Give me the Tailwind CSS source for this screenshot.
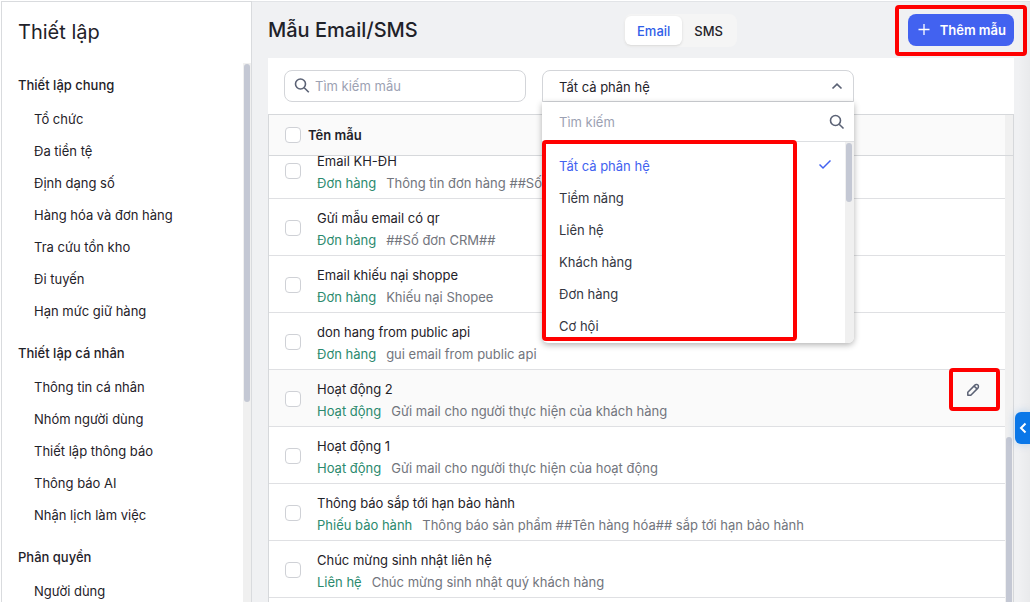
<!DOCTYPE html>
<html lang="vi">
<head>
  <meta charset="UTF-8">
  <meta name="viewport" content="width=device-width, initial-scale=1.0">
  <title>Mẫu Email/SMS - Thiết lập</title>
  <script src="https://cdn.jsdelivr.net/npm/@tailwindcss/browser@4"></script>
</head>
<body class="bg-white font-['Inter','Noto_Sans',sans-serif] text-[13px] text-[#1f2229]">
  <div class="relative flex h-screen overflow-hidden pt-px">

    <!-- Sidebar -->
    <aside class="ml-px flex w-[251px] shrink-0 flex-col border-x border-t border-[#d9dbde] bg-white">
      <h2 class="px-4 pt-4 pb-[17px] text-[20px] leading-7">Thiết lập</h2>
      <div class="flex min-h-0 flex-1">
        <nav class="min-w-0 flex-1 overflow-hidden pt-1">
          <h3 class="px-4 leading-9 font-medium">Thiết lập chung</h3>
          <ul class="mb-2 px-8 leading-8">
            <li><a href="#">Tổ chức</a></li>
            <li><a href="#">Đa tiền tệ</a></li>
            <li><a href="#">Định dạng số</a></li>
            <li><a href="#">Hàng hóa và đơn hàng</a></li>
            <li><a href="#">Tra cứu tồn kho</a></li>
            <li><a href="#">Đi tuyến</a></li>
            <li><a href="#">Hạn mức giữ hàng</a></li>
          </ul>
          <h3 class="px-4 leading-9 font-medium">Thiết lập cá nhân</h3>
          <ul class="mb-2 px-8 leading-8">
            <li><a href="#">Thông tin cá nhân</a></li>
            <li><a href="#">Nhóm người dùng</a></li>
            <li><a href="#">Thiết lập thông báo</a></li>
            <li><a href="#">Thông báo AI</a></li>
            <li><a href="#">Nhận lịch làm việc</a></li>
          </ul>
          <h3 class="px-4 leading-9 font-medium">Phân quyền</h3>
          <ul class="px-8 leading-8">
            <li><a href="#">Người dùng</a></li>
          </ul>
        </nav>
        <div class="w-2 bg-[#f0f0f0] p-px">
          <div class="h-[338px] rounded-full bg-[#c4c8d4]"></div>
        </div>
      </div>
    </aside>

    <!-- Main -->
    <main class="flex min-w-0 flex-1 flex-col border-t border-[#e2e4e7] bg-[#f0f1f3] pl-4">
      <header class="flex h-14 shrink-0 items-center pr-4">
        <h1 class="w-[356px] text-[20px] leading-7 font-medium">Mẫu Email/SMS</h1>
        <div class="flex rounded-lg bg-[#f5f5f5] py-0.5 pr-0.5 pl-px leading-7 font-medium">
          <button class="rounded-md bg-white px-3 pt-px text-[#2f5ee8] shadow-sm">Email</button>
          <button class="px-3 pt-px">SMS</button>
        </div>
        <div class="relative ml-auto">
          <button class="flex h-8 items-center rounded-lg bg-[#4262f0] pr-2 pl-2.5 font-semibold text-white">
            <svg class="mr-2.5 size-3" viewBox="0 0 12 12" fill="none" stroke="currentColor" stroke-width="1.3"><path d="M6 0v11M0.5 5.5h11"/></svg>
            <span class="pt-px">Thêm mẫu</span>
          </button>
          <div class="pointer-events-none absolute -inset-x-[13px] -top-[9px] -bottom-[10px] rounded-sm border-4 border-[#ff0000]"></div>
        </div>
      </header>

      <section class="mr-4 flex min-h-0 flex-1 flex-col bg-white">
        <!-- Filters -->
        <div class="flex gap-4 px-4 py-3">
          <div class="flex h-8 w-[242px] items-center rounded-lg border border-[#d3d5d9] px-[9px]">
            <svg class="mr-[5px] size-4 shrink-0 text-[#5b6275]" viewBox="0 0 16 16" fill="none" stroke="currentColor" stroke-width="1.6"><circle cx="6.5" cy="6" r="5"/><path d="M10.2 9.7 14.8 14.3"/></svg>
            <input type="text" aria-label="Tìm kiếm mẫu" placeholder="Tìm kiếm mẫu" class="w-full min-w-0 pt-0.5 outline-none placeholder:text-[#9ca1b3]">
          </div>

          <div class="relative w-[312px]">
            <select aria-label="Phân hệ" class="h-8 w-full appearance-none rounded-t-lg border border-[#d3d5d9] bg-white px-4 pt-[3px] outline-none">
              <option>Tất cả phân hệ</option>
              <option>Tiềm năng</option>
              <option>Liên hệ</option>
              <option>Khách hàng</option>
              <option>Đơn hàng</option>
              <option>Cơ hội</option>
            </select>
            <svg class="pointer-events-none absolute top-2.5 right-[11px] size-3 text-[#5b6275]" viewBox="0 0 12 12" fill="none" stroke="currentColor" stroke-width="1.7"><path d="M1.5 8.5 6 4.2 10.5 8.5"/></svg>

            <!-- Open list -->
            <div class="absolute inset-x-0 top-full z-10 rounded-b-md bg-white shadow-[0_2px_6px_rgba(0,0,0,0.3)]">
              <div class="flex h-10 items-center border-b border-[#dddfe2] pt-px pr-[9px] pl-[17px]">
                <input type="text" aria-label="Tìm kiếm" placeholder="Tìm kiếm" class="min-w-0 flex-1 pt-px outline-none placeholder:text-[#9ca1b3]">
                <svg class="size-4 text-[#5b6275]" viewBox="0 0 16 16" fill="none" stroke="currentColor" stroke-width="1.6"><circle cx="6.5" cy="6.5" r="5"/><path d="M10.2 10.2 14.5 14.5"/></svg>
              </div>
              <div class="flex h-[201px] overflow-hidden rounded-b-md">
                <ul role="listbox" class="flex-1 py-2 pl-[17px] leading-8 text-[#33363f]">
                  <li role="option" aria-selected="true" class="flex items-center justify-between pr-3.5 text-[#4262f0]">
                    Tất cả phân hệ
                    <svg class="size-3" viewBox="0 0 12 12" fill="none" stroke="currentColor" stroke-width="1.5"><path d="M0.5 4.5 4 8 11.5 0.5"/></svg>
                  </li>
                  <li role="option">Tiềm năng</li>
                  <li role="option">Liên hệ</li>
                  <li role="option">Khách hàng</li>
                  <li role="option">Đơn hàng</li>
                  <li role="option">Cơ hội</li>
                </ul>
                <div class="w-[9px] bg-[#f0f0f0] p-px pr-0.5">
                  <div class="h-[59px] rounded-full bg-[#c4c8d4]"></div>
                </div>
              </div>
              <div class="pointer-events-none absolute top-[38px] right-[57px] bottom-0.5 left-0 rounded-sm border-4 border-[#ff0000]"></div>
            </div>
          </div>
        </div>

        <!-- Template list -->
        <div class="flex min-h-0 flex-1 border border-b-0 border-[#d6d8db]">
          <div class="flex min-w-0 flex-1 flex-col">
            <label class="flex h-[41px] shrink-0 items-center gap-[7px] border-b border-[#d6d8db] bg-[#fafafa] px-4 font-semibold">
              <input type="checkbox" class="size-4 appearance-none rounded border border-[#cfd1d6] bg-white">
              <span class="pt-0.5">Tên mẫu</span>
            </label>
            <div class="min-h-0 flex-1 overflow-hidden">
              <ul class="-mt-3.5">
                <li class="flex h-[57px] items-center gap-4 border-b border-[#dfe0e3] px-4 pt-0.5">
                  <input type="checkbox" aria-label="Email KH-ĐH" class="size-4 shrink-0 appearance-none rounded border border-[#cfd1d6] bg-white">
                  <div class="flex-1 pt-0.5 leading-[22px]">
                    <p>Email KH-ĐH</p>
                    <p class="text-[#72757d]"><span class="mr-2.5 text-[#2b8a6e]">Đơn hàng</span>Thông tin đơn hàng ##Số đơn hàng##</p>
                  </div>
                </li>
                <li class="flex h-[57px] items-center gap-4 border-b border-[#dfe0e3] px-4 pt-0.5">
                  <input type="checkbox" aria-label="Gửi mẫu email có qr" class="size-4 shrink-0 appearance-none rounded border border-[#cfd1d6] bg-white">
                  <div class="flex-1 pt-0.5 leading-[22px]">
                    <p>Gửi mẫu email có qr</p>
                    <p class="text-[#72757d]"><span class="mr-2.5 text-[#2b8a6e]">Đơn hàng</span>##Số đơn CRM##</p>
                  </div>
                </li>
                <li class="flex h-[57px] items-center gap-4 border-b border-[#dfe0e3] px-4 pt-0.5">
                  <input type="checkbox" aria-label="Email khiếu nại shoppe" class="size-4 shrink-0 appearance-none rounded border border-[#cfd1d6] bg-white">
                  <div class="flex-1 pt-0.5 leading-[22px]">
                    <p>Email khiếu nại shoppe</p>
                    <p class="text-[#72757d]"><span class="mr-2.5 text-[#2b8a6e]">Đơn hàng</span>Khiếu nại Shopee</p>
                  </div>
                </li>
                <li class="flex h-[57px] items-center gap-4 border-b border-[#dfe0e3] px-4 pt-0.5">
                  <input type="checkbox" aria-label="don hang from public api" class="size-4 shrink-0 appearance-none rounded border border-[#cfd1d6] bg-white">
                  <div class="flex-1 pt-0.5 leading-[22px]">
                    <p>don hang from public api</p>
                    <p class="text-[#72757d]"><span class="mr-2.5 text-[#2b8a6e]">Đơn hàng</span>gui email from public api</p>
                  </div>
                </li>
                <li class="flex h-[57px] items-center gap-4 border-b border-[#dfe0e3] bg-[#fafafa] pt-0.5 pr-[5px] pl-4">
                  <input type="checkbox" aria-label="Hoạt động 2" class="size-4 shrink-0 appearance-none rounded border border-[#cfd1d6] bg-white">
                  <div class="flex-1 pt-0.5 leading-[22px]">
                    <p>Hoạt động 2</p>
                    <p class="text-[#72757d]"><span class="mr-2.5 text-[#2b8a6e]">Hoạt động</span>Gửi mail cho người thực hiện của khách hàng</p>
                  </div>
                  <div class="relative h-[39px] w-[51px] self-start">
                    <button aria-label="Sửa" class="flex size-full items-center justify-center pr-1 pb-1 text-[#5b6275]">
                      <svg class="size-4" viewBox="0 0 16 16" fill="none" stroke="currentColor" stroke-width="1.5" stroke-linejoin="round"><path d="M2.8 10.2 9.9 3.1a1.9 1.9 0 0 1 1.4-.5h.5a1.6 1.6 0 0 1 1.6 1.6v.5a1.9 1.9 0 0 1-.5 1.4L5.8 13.2H2.8zM9.4 4.4 11.8 6.6"/></svg>
                    </button>
                    <div class="pointer-events-none absolute inset-x-0 -top-1 bottom-0 rounded-sm border-4 border-[#ff0000]"></div>
                  </div>
                </li>
                <li class="flex h-[57px] items-center gap-4 border-b border-[#dfe0e3] px-4 pt-0.5">
                  <input type="checkbox" aria-label="Hoạt động 1" class="size-4 shrink-0 appearance-none rounded border border-[#cfd1d6] bg-white">
                  <div class="flex-1 pt-0.5 leading-[22px]">
                    <p>Hoạt động 1</p>
                    <p class="text-[#72757d]"><span class="mr-2.5 text-[#2b8a6e]">Hoạt động</span>Gửi mail cho người thực hiện của hoạt động</p>
                  </div>
                </li>
                <li class="flex h-[57px] items-center gap-4 border-b border-[#dfe0e3] px-4 pt-0.5">
                  <input type="checkbox" aria-label="Thông báo sắp tới hạn bảo hành" class="size-4 shrink-0 appearance-none rounded border border-[#cfd1d6] bg-white">
                  <div class="flex-1 pt-0.5 leading-[22px]">
                    <p>Thông báo sắp tới hạn bảo hành</p>
                    <p class="text-[#72757d]"><span class="mr-2.5 text-[#2b8a6e]">Phiếu bảo hành</span>Thông báo sản phẩm ##Tên hàng hóa## sắp tới hạn bảo hành</p>
                  </div>
                </li>
                <li class="flex h-[57px] items-center gap-4 border-b border-[#dfe0e3] px-4 pt-0.5">
                  <input type="checkbox" aria-label="Chúc mừng sinh nhật liên hệ" class="size-4 shrink-0 appearance-none rounded border border-[#cfd1d6] bg-white">
                  <div class="flex-1 pt-0.5 leading-[22px]">
                    <p>Chúc mừng sinh nhật liên hệ</p>
                    <p class="text-[#72757d]"><span class="mr-2.5 text-[#2b8a6e]">Liên hệ</span>Chúc mừng sinh nhật quý khách hàng</p>
                  </div>
                </li>
              </ul>
            </div>
          </div>
          <!-- Scrollbar -->
          <div class="flex w-2 flex-col bg-[#f0f0f0]">
            <div class="h-[41px] shrink-0 border-b border-[#d6d8db]"></div>
            <div class="flex flex-1 flex-col justify-end px-px">
              <div class="h-[37%] rounded-t-full bg-[#c4c8d4]"></div>
            </div>
          </div>
        </div>
      </section>
    </main>

    <!-- Right rail -->
    <div class="pointer-events-none absolute top-0.5 right-0 bottom-0 w-3 bg-linear-to-r from-transparent to-black/3"></div>
    <button aria-label="Mở bảng bên" class="absolute top-[412px] right-0 flex h-8 w-[15px] items-center justify-center rounded-l-md bg-[#0a77e8] text-white shadow-[0_0_8px_rgba(10,119,232,0.25)]">
      <svg class="h-3 w-2" viewBox="0 0 8 12" fill="none" stroke="currentColor" stroke-width="2"><path d="M6.5 1.5 2 6 6.5 10.5"/></svg>
    </button>
  </div>
</body>
</html>
